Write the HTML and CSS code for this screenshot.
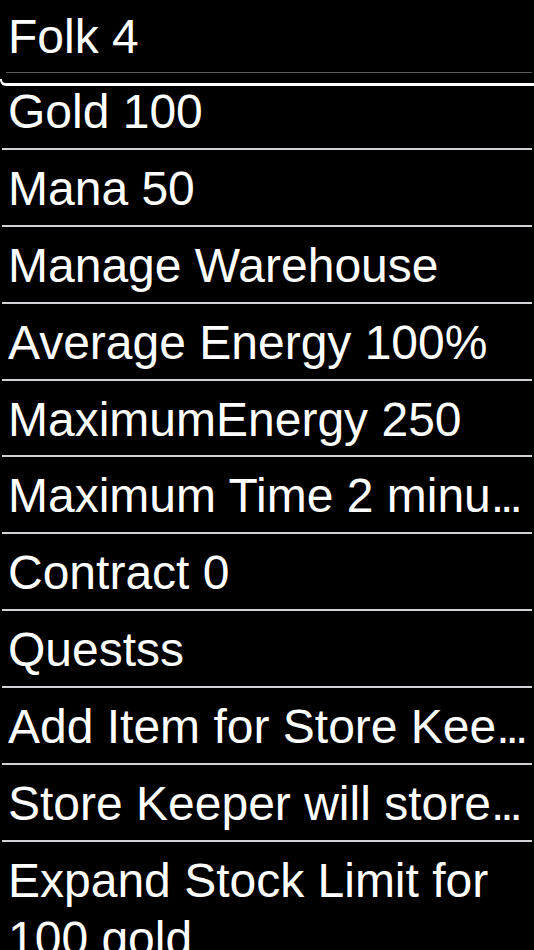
FILE: index.html
```html
<!DOCTYPE html>
<html lang="en">
<head>
  <meta charset="UTF-8">
  <title>Store</title>
  <meta name="viewport" content="width=device-width, initial-scale=1.0">
  <link rel="stylesheet" href="styles.css">
</head>
<body>

<div class="screen">
  <div class="header">
    <div class="header-row">Folk 4</div>
  </div>
  <div class="scroll-edge"></div>

  <ul class="menu">
    <li>Gold 100</li>
    <li>Mana 50</li>
    <li>Manage Warehouse</li>
    <li>Average Energy 100%</li>
    <li>MaximumEnergy 250</li>
    <li>Maximum Time 2 minu<span class="dots">...</span></li>
    <li>Contract 0</li>
    <li>Questss</li>
    <li>Add Item for Store Kee<span class="dots">...</span></li>
    <li>Store Keeper will store<span class="dots">...</span></li>
    <li class="wrap">Expand Stock Limit for 100 gold</li>
  </ul>
</div>

</body>
</html>
```

FILE: styles.css
```css
body { margin: 0; background: #000; color: #fff; font-family: "Liberation Sans", Arial, sans-serif; font-size: 48px; }
.screen { position: relative; height: 950px; overflow: hidden; }

.header-row {
  margin: 0 2px 0 6px; padding: 7.7px 0 6.3px 2px; line-height: 57.9px;
  border-bottom: 1px solid #5c5c60; white-space: nowrap;
}

/* white edge of the header card, drawn over the first row */
.scroll-edge {
  position: absolute; top: 79px; left: 0; right: 0; height: 4px;
  border-left: 2px solid #fff; border-bottom: 3px solid #fff;
  border-bottom-left-radius: 6px;
}

.menu { list-style: none; margin: 0; padding: 0; }
.menu li {
  margin: 0 2px; padding: 10px 0 7px 6px; line-height: 57.9px;
  border-bottom: 2px solid #d1d1d6; white-space: nowrap; overflow: hidden;
}
.menu li.wrap { white-space: normal; }
.dots { letter-spacing: -4px; }
```
